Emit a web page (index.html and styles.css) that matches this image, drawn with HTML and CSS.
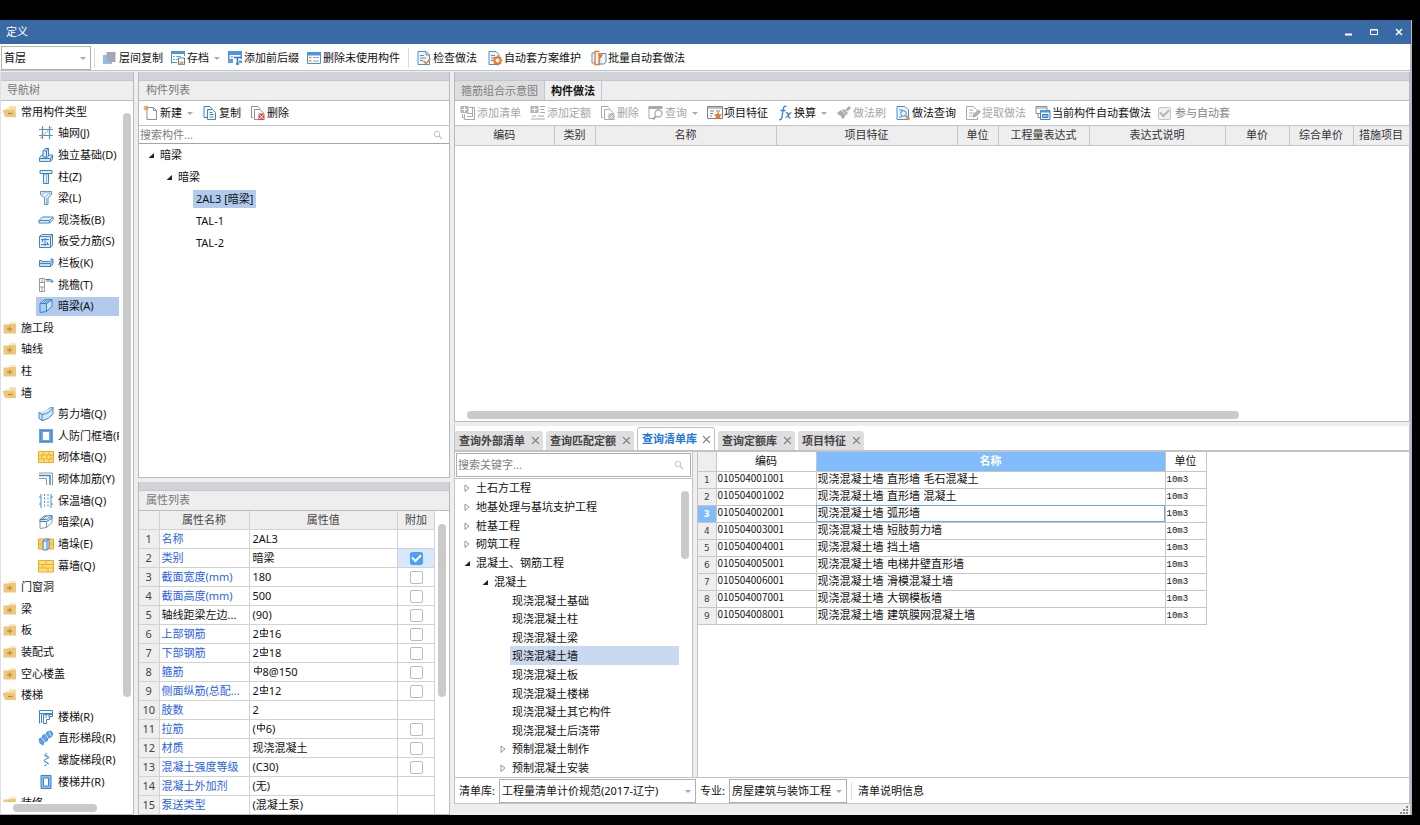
FILE: index.html
```html
<!DOCTYPE html>
<html lang="zh-CN">
<head>
<meta charset="utf-8">
<title>定义</title>
<link rel="stylesheet" href="styles.css">
</head>
<body>
<svg class="sprite" aria-hidden="true">
  <symbol id="folder" viewBox="0 0 16 16"><path d="M8 2.500h5q1 0 1 1H7z" fill="#f3cf8c"/><path d="M1.500 4.500h4.500l1-.5h7v9.500h-12.500z" fill="#eec67c"/><path d="M7.700 6.500v5M5.200 9h5" stroke="#c28f3a" stroke-width="1.300"/></symbol>
  <symbol id="folder-open" viewBox="0 0 16 16"><path d="M3 4.500h4l1-1h6v9h-10z" fill="#f6dba6"/><path d="M7 2.500h7v1H7z" fill="#f3cf8c"/><path d="M.5 6h12l1.500 7H3z" fill="#eec67c"/><path d="M6 9.500h4.500" stroke="#b9842c" stroke-width="1.200"/></symbol>
  <symbol id="axis" viewBox="0 0 16 16"><path d="M4.500 1v13M11.500 1v13M1 4.500h14M1 10.500h14" stroke="#4f93d8" stroke-width="1.200" fill="none"/><path d="M2 13.500 13.500 2" stroke="#e08a4a"/></symbol>
  <symbol id="base" viewBox="0 0 16 16" fill="#d9e9fa" stroke="#3f83cf"><path d="M1.500 10.500 4 8h10.500v4l-2 2.500h-11z"/><path d="M1.500 11.500h11v3M12.500 11.500l2-3"/><path d="M5 10V4l2-2.500h3.500V9L9 10.500z"/><path d="M5 4h3.500v6M8.500 4l2-2.500"/></symbol>
  <symbol id="column" viewBox="0 0 16 16" fill="#e3effb" stroke="#3f83cf"><path d="M5.500 5h5v9.500h-5z"/><path d="M2 1.500h12v3H2z"/><path d="M8.500 5v9" stroke="#8fb9e6"/></symbol>
  <symbol id="beam" viewBox="0 0 16 16" fill="#e3effb" stroke="#5b97d6"><path d="M2.500 1.500h11v3L10 8v6.500H6.500V8l-4-3.500z"/><path d="M3 4.500 8 2l5 2.500M6.500 8 12 2M8.500 8v6" stroke="#8fb9e6"/></symbol>
  <symbol id="slab" viewBox="0 0 16 16" fill="#e3effb" stroke="#3f83cf"><path d="M1 8.500 4.500 5h10.500v2.500L11.500 11H1z"/><path d="M1 8.500h10.500L15 5M11.500 8.500V11"/></symbol>
  <symbol id="slabbar" viewBox="0 0 16 16" fill="none" stroke="#3f83cf"><path d="M1.500 3.500 3.500 1.500h11v10.500l-2 2.500h-11z" fill="#e3effb"/><path d="M1.500 3.500h11v11M12.500 3.500l2-2M3 6.500h8M3 11.500h8M7 5v8M4.500 6v3M9.500 9v3"/></symbol>
  <symbol id="rail" viewBox="0 0 16 16" fill="#c7defa" stroke="#3f83cf"><path d="M1.500 5.500v6h11l2.500-2.500V4h-2v2.500H3.500v-1z"/><path d="M1.500 8.500h11L15 6M12.500 8.500v3"/></symbol>
  <symbol id="eaves" viewBox="0 0 16 16" fill="none" stroke="#9a9a9a"><path d="M1.500 1.500h5v13h-5zM1.500 5.500h5M1.500 10h5M4 1.500v4M4 10v4"/><path d="M7.500 2.500h5l2.500 1.500v1h-2v-1H8" stroke="#3f83cf"/></symbol>
  <symbol id="hbeam" viewBox="0 0 16 16" fill="#a9cdf5" stroke="#3f83cf"><path d="M2 5.500h6.500v8L2 14.500z"/><path d="M8.500 5.500 14 2v6.500l-5.500 5z" fill="#cfe3f9"/><path d="M2 5.500 6 2l8-.5-5.500 4z" fill="#dbeafa"/><path d="M4.500 5.500l4-3.500M6.500 5.500l5-4"/></symbol>
  <symbol id="hbeam-plain" viewBox="0 0 16 16" fill="#fff" stroke="#8a98a8"><path d="M2 5.500h6.500v8L2 14.500z"/><path d="M8.500 5.500 14 2v6.500l-5.500 5z"/><path d="M2 7.500v-2L6 2l8-.5v3l-5.500 3z" fill="#dbeafa" stroke="#3f83cf"/><path d="M2 5.500h6.500L14 2M4.500 5.500l4-3.500" stroke="#3f83cf"/></symbol>
  <symbol id="curve" viewBox="0 0 16 16" fill="#d4e6fa" stroke="#3f83cf"><path d="M1 6.500q8 0 10.500-4.500l3.500-.5v6Q11 13.500 4 14.500L1 12.500z"/><path d="M1 6.500l3 2q8-1 11-7M4 8.500v6"/></symbol>
  <symbol id="frame" viewBox="0 0 16 16"><path d="M1 1h14v14H1z" fill="#6aa5ea"/><path d="M2.500 2.500h11v11h-11z" fill="none" stroke="#4a8bd8"/><path d="M5 4h6v8H5z" fill="#fff"/></symbol>
  <symbol id="brick" viewBox="0 0 16 16"><path d="M.5 2.500h15v11H.5z" fill="#ffdf88" stroke="#f5ac1c"/><path d="M.5 6h15M.5 10h15M5.500 2.500V6M11 2.500V6M3.500 6v4M9 6v4M13 6v4M6 10v3.500M11 10v3.500" stroke="#f5ac1c"/></symbol>
  <symbol id="brickbar" viewBox="0 0 16 16" fill="none" stroke="#8f979f"><path d="M1 2h13.500v12.500M1 7.500h7.500V14"/><path d="M1 4.500h11V14" stroke="#3f83cf" stroke-width="1.500"/></symbol>
  <symbol id="insul" viewBox="0 0 16 16" fill="none" stroke="#4a8fdd"><path d="M3 1v14M13 1v14"/><path d="M6.500 1v14M10 1v14M1 4h2M1 11h2M13 4h2M13 11h2" stroke-dasharray="2 1.500"/></symbol>
  <symbol id="pier" viewBox="0 0 16 16"><path d="M.5 3h15v10H.5z" fill="#ffd061" stroke="#f0aa20"/><path d="M.5 8h15" stroke="#f0aa20"/><path d="M5 5l2-2h4v9l-2 2H5z" fill="#e3effb" stroke="#3f83cf"/><path d="M5 5h4v9M9 5l2-2" fill="none" stroke="#3f83cf"/></symbol>
  <symbol id="curtain" viewBox="0 0 16 16"><path d="M.5 2.500h15v11.500H.5z" fill="#ffdf88" stroke="#f5ac1c"/><path d="M.5 6.500h15M.5 10h15M8 2.500V6.500M5 6.500V10M10 10v4" stroke="#f5ac1c"/></symbol>
  <symbol id="stair" viewBox="0 0 16 16" fill="none" stroke="#3f83cf"><path d="M1.500 14.500v-13h13v6h-3v3h-3v4h-3v-9h9M1.500 4.500h13M3.500 5v9M8 5v4M11 5v3"/></symbol>
  <symbol id="flight" viewBox="0 0 16 16"><path d="M1 9l3-1 1-3 3 0 1-3 4-1 2 3-2 3-3 1-1 3-3 1-1 3-3-2z" fill="#5fa2ea" stroke="#4a8fdd"/><path d="M4 8l3 4M8 5l2 3M11 2l2 4" stroke="#cfe3f9"/></symbol>
  <symbol id="spiral" viewBox="0 0 16 16" fill="none" stroke="#4a8fdd"><path d="M9 1q-4 2 0 3 4 1.500-1 3-4 1.500 0 3 4 1.500-2 4M6 3l5 3M6 9l5 3"/></symbol>
  <symbol id="well" viewBox="0 0 16 16"><path d="M3 1.500h10v13H3z" fill="#8dbcf0" stroke="#3f83cf"/><path d="M5.500 4h5v8h-5z" fill="#fff" stroke="#3f83cf"/></symbol>
  <symbol id="open" viewBox="0 0 8 8"><path d="M7 2v5H1.500z" fill="#222"/></symbol>
  <symbol id="closed" viewBox="0 0 8 8"><path d="M2 1l4 3-4 3.500z" fill="#fff" stroke="#888" stroke-width=".9"/></symbol>
  <symbol id="search" viewBox="0 0 10 10"><circle cx="4" cy="4" r="2.800" fill="none" stroke="#c4c4c4"/><path d="M6 6l3 3" stroke="#c4c4c4" stroke-width="1.300"/></symbol>
  <symbol id="layers" viewBox="0 0 16 16"><path d="M1 5h9v9H1z" fill="#8fbdf0"/><path d="M4.500 2h9v10h-9z" fill="#a4a8b2"/></symbol>
  <symbol id="archive" viewBox="0 0 16 16" fill="none" stroke="#4a8fdd"><path d="M1.500 13.500v-12h13V6M1.500 12.500H7"/><path d="M1 1h14v3H1z" fill="#4a94e6" stroke="none"/><path d="M3 6.500h2M6 6.500h5M3 9.500h2M6 9.500h2" stroke="#8fa2b8"/><path d="M8.500 8h6v6.500h-6z" fill="#fff" stroke="#3f83cf"/><path d="M9.500 11.500h4v3h-4z" fill="#f0a050" stroke="none"/></symbol>
  <symbol id="affix" viewBox="0 0 16 16"><path d="M1 1h14v4H1zM1 5h1.500v6H1zM13.500 5H15v4h-1.500z" fill="#4a94e6"/><path d="M1 9h5v4H1z" fill="#5d9de4"/><path d="M3.500 6.500h3M3.500 8h2" stroke="#9fb4cc"/><path d="M7 7.500h7M10.500 7v7M9 14h3" stroke="#2f74c2" stroke-width="1.500"/><path d="M12 10.500h3V13h-3z" fill="#5d9de4"/></symbol>
  <symbol id="listx" viewBox="0 0 16 16"><path d="M1.500 2.500h13v11h-13z" fill="#fff" stroke="#4a8fdd"/><path d="M1 2h14v3.500H1z" fill="#4a94e6"/><path d="M3 7.500h2.500M3 11h2.500" stroke="#f0923c" stroke-width="1.500"/><path d="M7 7.500h6M7 11h6" stroke="#98a4b2"/></symbol>
  <symbol id="check" viewBox="0 0 16 16"><path d="M2 1.500h8l3.500 3.500v9.500H2z" fill="#edf5fd" stroke="#4a8fdd"/><path d="M10 1.500V5h3.500M4 5.500h4M4 8h6M4 10.500h3" stroke="#5f8fbf" fill="none"/><path d="M7.500 11l2.500 2.500 4.500-5" stroke="#f07a2a" stroke-width="1.500" fill="none"/></symbol>
  <symbol id="gear" viewBox="0 0 16 16"><path d="M2 1.500h7l3 3v10H2z" fill="#edf5fd" stroke="#4a8fdd"/><path d="M4 5.500h4M4 8h3M4 10.500h2" stroke="#5f8fbf"/><circle cx="10.500" cy="10.500" r="3" fill="#fff" stroke="#f07a2a" stroke-width="2"/><path d="M10.500 5.500v2M10.500 13.500v2M5.500 10.500h2M13.500 10.500h2M7 7l1.500 1.500M12.500 12.500L14 14M14 7l-1.500 1.500M8.500 12.500L7 14" stroke="#f07a2a" stroke-width="1.500"/></symbol>
  <symbol id="batch" viewBox="0 0 16 16" fill="none"><path d="M3.500 3H1v10h2.500M8 3.500h7v8.500l-2 2H8z" stroke="#4a8fdd" fill="#f2f8fe"/><path d="M8.500 1.500H4v13h4.500V7" stroke="#f07a2a" stroke-width="1.500"/><path d="M6.500 3.500q3-1.500 4 1h2l-3 4-3-4h2" fill="#f07a2a"/></symbol>
  <symbol id="new" viewBox="0 0 16 16"><path d="M4 2.500h6.500l3 3v9H4z" fill="#fff" stroke="#8b9097"/><path d="M10.500 2.500v3h3" fill="none" stroke="#8b9097"/><path d="M3 .5v5M.5 3h5M1 1l4 4M5 1L1 5" stroke="#f0923c"/></symbol>
  <symbol id="copy" viewBox="0 0 16 16" fill="#fff" stroke="#3f83cf"><path d="M2 1.500h6l2 2v9H2z"/><path d="M5.500 4.500h5l3 3v7h-8z"/><path d="M7.500 7.500h3M7.500 9.500h4M7.500 12h4"/></symbol>
  <symbol id="delete" viewBox="0 0 16 16" fill="#fff" stroke="#8b9097"><path d="M3 12.500H1.500v-11H8l2 2"/><path d="M4.500 4.500H10l3 3v7H4.500z"/><path d="M8.500 8.500h6v6.500h-6z" fill="#d84848" stroke="none"/><path d="M9.500 9.500l4 4.500M13.500 9.500l-4 4.500" stroke="#fff"/></symbol>
  <symbol id="addlist" viewBox="0 0 16 16" fill="none" stroke="#a9a9a9"><path d="M.5 1h8v7h-8z" fill="#b5b5b5" stroke="none"/><path d="M4.500 2v5M2 4.500h5" stroke="#fff"/><path d="M9 2.500h5.500v12h-10V9M2.500 9v3.500h2M7 8.500h5M7 11.500h5M12.500 3v9"/></symbol>
  <symbol id="addquota" viewBox="0 0 16 16" fill="none" stroke="#a9a9a9"><path d="M.5 1h8v7h-8z" fill="#b5b5b5" stroke="none"/><path d="M4.500 2v5M2 4.500h5" stroke="#fff"/><path d="M10 1.500h5M10 4.500h4M10 7.500h5M2 11h4M8 11h6M1 14h14"/></symbol>
  <symbol id="delgray" viewBox="0 0 16 16" fill="#fff" stroke="#a9a9a9"><path d="M3 12.500H1.500v-11H8l2 2"/><path d="M4.500 4.500H10l3 3v7H4.500z"/><path d="M8.500 8.500h6v6.500h-6z" fill="#aaa" stroke="none"/><path d="M9.500 9.500l4 4.500M13.500 9.500l-4 4.500" stroke="#fff"/></symbol>
  <symbol id="query" viewBox="0 0 16 16" fill="none" stroke="#a9a9a9"><path d="M.5 1h14v3H.5z" fill="#a9a9a9" stroke="none"/><path d="M1 2v11.500h4"/><circle cx="10.500" cy="8.500" r="3.500" stroke-width="1.300"/><path d="M8 11l-3 3.500" stroke-width="2"/></symbol>
  <symbol id="feature" viewBox="0 0 16 16"><path d="M.5 1.500h15v12H.5z" fill="#fff" stroke="#78828c"/><path d="M1 3h14" stroke="#78828c"/><path d="M3 6h4M3 8.500h3M3 11h2M9 6h4" stroke="#78828c"/><path d="M11 6.500l1.300 2.700 3 .3-2.200 2 .7 3-2.800-1.500L8.200 14.500l.7-3-2.200-2 3-.3z" fill="#f07a2a"/></symbol>
  <symbol id="fx" viewBox="0 0 16 16" fill="none" stroke="#3a7fd6" stroke-width="1.300"><path d="M9.500 1.500Q7 0 6.300 4L5 12Q4.300 15.500 2 14.500M3.500 5.500h5M9 8q1.500-1 2 1.500l.7 2.500q.6 1.500 1.800.5M14.500 8q-1.500-.5-3 2t-3 2.500"/></symbol>
  <symbol id="brush" viewBox="0 0 16 16" fill="#ababab"><path d="M1 8l4-3 5 5-3 4q-2-1-2-3-2 0-4-3z"/><path d="M6 5l2-1 4 4-1.500 2z"/><path d="M9.500 4.500L13 1l2 2-3.500 3.500z"/></symbol>
  <symbol id="find" viewBox="0 0 16 16" fill="none"><path d="M2 1.500h8l3.500 3.500v9.500H2z" fill="#edf5fd" stroke="#4a8fdd"/><path d="M4 5h4M4 12h3" stroke="#5f8fbf"/><circle cx="8.500" cy="8.500" r="2.800" stroke="#3a7fd6"/><path d="M11 11l3.500 3.500" stroke="#f0923c" stroke-width="2.500"/></symbol>
  <symbol id="extract" viewBox="0 0 16 16" fill="none" stroke="#a9a9a9"><path d="M12.500 12v2.500H1.500v-13h7l4 4M4 5h4M4 8h5M4 11h3"/><path d="M8 12l.5-2.500 5-4.500 2 2-5 4.500z" fill="#b2b2b2"/></symbol>
  <symbol id="current" viewBox="0 0 16 16" fill="#fff" stroke="#8b9097"><path d="M1 1.500h11v7H1zM1 3h11M3 9v3.500h2"/><path d="M5.500 5.500h9.500v9H5.500z" stroke="#3a7fd6"/><path d="M5 5h10v2.500H5z" fill="#4a94e6" stroke="none"/><path d="M7.500 9.500h5.500v3H7.500z" fill="#8fbdf0" stroke="#3a7fd6"/></symbol>
  <symbol id="rebar3" viewBox="0 0 10 10"><path d="M1.500 2.500h7v3.500h-7zM5 0v8.500M1 8.500h8" fill="none" stroke="#222" stroke-width=".9"/></symbol>
  <symbol id="rebar1" viewBox="0 0 10 10"><path d="M1.500 2.500h7v3.500h-7zM5 0v9" fill="none" stroke="#222" stroke-width=".9"/></symbol>
  <symbol id="close" viewBox="0 0 8 8"><path d="M1 1l6 6M7 1L1 7" stroke="currentColor" fill="none"/></symbol>
</svg>

<main class="window">
  <header class="titlebar">
    <h1>定义</h1>
    <div class="win-buttons">
      <button aria-label="最小化"><svg viewBox="0 0 8 8"><path d="M0 6.500h7" stroke="#fff" stroke-width="2"/></svg></button>
      <button aria-label="最大化"><svg viewBox="0 0 8 8"><path d="M.5 1.500h7v5h-7zM.5 2h7" fill="none" stroke="#fff"/></svg></button>
      <button aria-label="关闭"><svg viewBox="0 0 8 8"><path d="M1 1l6 6M7 1L1 7" stroke="#fff" stroke-width="1.500"/></svg></button>
    </div>
  </header>

  <div class="toolbar main-toolbar">
    <span class="select floor"><select aria-label="楼层"><option>首层</option></select></span>
    <div class="group">
      <button><svg><use href="#layers"/></svg>层间复制</button>
      <button><svg><use href="#archive"/></svg>存档<i class="drop"></i></button>
      <button><svg><use href="#affix"/></svg>添加前后缀</button>
      <button><svg><use href="#listx"/></svg>删除未使用构件</button>
    </div>
    <div class="group wide">
      <button><svg><use href="#check"/></svg>检查做法</button>
      <button><svg><use href="#gear"/></svg>自动套方案维护</button>
      <button><svg><use href="#batch"/></svg>批量自动套做法</button>
    </div>
  </div>

  <div class="columns">
    <section class="panel nav">
      <h2 class="panel-title">导航树</h2>
      <div class="nav-body">
        <ul class="nav-tree">
          <li><button><svg><use href="#folder-open"/></svg>常用构件类型</button></li>
          <li class="leaf"><button><svg><use href="#axis"/></svg>轴网(J)</button></li>
          <li class="leaf"><button><svg><use href="#base"/></svg>独立基础(D)</button></li>
          <li class="leaf"><button><svg><use href="#column"/></svg>柱(Z)</button></li>
          <li class="leaf"><button><svg><use href="#beam"/></svg>梁(L)</button></li>
          <li class="leaf"><button><svg><use href="#slab"/></svg>现浇板(B)</button></li>
          <li class="leaf"><button><svg><use href="#slabbar"/></svg>板受力筋(S)</button></li>
          <li class="leaf"><button><svg><use href="#rail"/></svg>栏板(K)</button></li>
          <li class="leaf"><button><svg><use href="#eaves"/></svg>挑檐(T)</button></li>
          <li class="leaf selected"><button><svg><use href="#hbeam"/></svg>暗梁(A)</button></li>
          <li><button><svg><use href="#folder"/></svg>施工段</button></li>
          <li><button><svg><use href="#folder"/></svg>轴线</button></li>
          <li><button><svg><use href="#folder"/></svg>柱</button></li>
          <li><button><svg><use href="#folder-open"/></svg>墙</button></li>
          <li class="leaf"><button><svg><use href="#curve"/></svg>剪力墙(Q)</button></li>
          <li class="leaf"><button><svg><use href="#frame"/></svg>人防门框墙(R)</button></li>
          <li class="leaf"><button><svg><use href="#brick"/></svg>砌体墙(Q)</button></li>
          <li class="leaf"><button><svg><use href="#brickbar"/></svg>砌体加筋(Y)</button></li>
          <li class="leaf"><button><svg><use href="#insul"/></svg>保温墙(Q)</button></li>
          <li class="leaf"><button><svg><use href="#hbeam-plain"/></svg>暗梁(A)</button></li>
          <li class="leaf"><button><svg><use href="#pier"/></svg>墙垛(E)</button></li>
          <li class="leaf"><button><svg><use href="#curtain"/></svg>幕墙(Q)</button></li>
          <li><button><svg><use href="#folder"/></svg>门窗洞</button></li>
          <li><button><svg><use href="#folder"/></svg>梁</button></li>
          <li><button><svg><use href="#folder"/></svg>板</button></li>
          <li><button><svg><use href="#folder"/></svg>装配式</button></li>
          <li><button><svg><use href="#folder"/></svg>空心楼盖</button></li>
          <li><button><svg><use href="#folder-open"/></svg>楼梯</button></li>
          <li class="leaf"><button><svg><use href="#stair"/></svg>楼梯(R)</button></li>
          <li class="leaf"><button><svg><use href="#flight"/></svg>直形梯段(R)</button></li>
          <li class="leaf"><button><svg><use href="#spiral"/></svg>螺旋梯段(R)</button></li>
          <li class="leaf"><button><svg><use href="#well"/></svg>楼梯井(R)</button></li>
          <li><button><svg><use href="#folder"/></svg>装修</button></li>
        </ul>
        <div class="vscroll nav-vscroll"><i></i></div>
        <div class="hscroll nav-hscroll"><i></i></div>
      </div>
    </section>

    <div class="middle">
      <section class="panel components">
        <h2 class="panel-title">构件列表</h2>
        <div class="toolbar comp-toolbar">
          <button><svg><use href="#new"/></svg>新建<i class="drop"></i></button>
          <button><svg><use href="#copy"/></svg>复制</button>
          <button><svg><use href="#delete"/></svg>删除</button>
        </div>
        <label class="search"><input type="text" placeholder="搜索构件..." aria-label="搜索构件"><svg><use href="#search"/></svg></label>
        <ul class="tree comp-tree">
          <li class="l1"><svg><use href="#open"/></svg><span>暗梁</span></li>
          <li class="l2"><svg><use href="#open"/></svg><span>暗梁</span></li>
          <li class="l3 selected"><span>2AL3 [暗梁]</span></li>
          <li class="l3"><span>TAL-1</span></li>
          <li class="l3"><span>TAL-2</span></li>
        </ul>
      </section>
      <section class="panel props">
        <h2 class="panel-title">属性列表</h2>
        <div class="props-body">
          <table class="prop-table">
            <colgroup><col class="w-num"><col class="w-name"><col><col class="w-add"></colgroup>
            <thead><tr><th></th><th>属性名称</th><th>属性值</th><th>附加</th></tr></thead>
            <tbody>
              <tr><th>1</th><td>名称</td><td>2AL3</td><td></td></tr>
              <tr><th>2</th><td>类别</td><td>暗梁</td><td class="on"><input type="checkbox" aria-label="附加 类别" checked></td></tr>
              <tr><th>3</th><td>截面宽度(mm)</td><td>180</td><td><input type="checkbox" aria-label="附加 截面宽度"></td></tr>
              <tr><th>4</th><td>截面高度(mm)</td><td>500</td><td><input type="checkbox" aria-label="附加 截面高度"></td></tr>
              <tr class="plain"><th>5</th><td>轴线距梁左边...</td><td>(90)</td><td><input type="checkbox" aria-label="附加 轴线距梁左边"></td></tr>
              <tr><th>6</th><td>上部钢筋</td><td>2<svg><use href="#rebar3"/></svg>16</td><td><input type="checkbox" aria-label="附加 上部钢筋"></td></tr>
              <tr><th>7</th><td>下部钢筋</td><td>2<svg><use href="#rebar3"/></svg>18</td><td><input type="checkbox" aria-label="附加 下部钢筋"></td></tr>
              <tr><th>8</th><td>箍筋</td><td><svg><use href="#rebar1"/></svg>8@150</td><td><input type="checkbox" aria-label="附加 箍筋"></td></tr>
              <tr><th>9</th><td>侧面纵筋(总配...</td><td>2<svg><use href="#rebar3"/></svg>12</td><td><input type="checkbox" aria-label="附加 侧面纵筋"></td></tr>
              <tr><th>10</th><td>肢数</td><td>2</td><td></td></tr>
              <tr><th>11</th><td>拉筋</td><td>(<svg><use href="#rebar1"/></svg>6)</td><td><input type="checkbox" aria-label="附加 拉筋"></td></tr>
              <tr><th>12</th><td>材质</td><td>现浇混凝土</td><td><input type="checkbox" aria-label="附加 材质"></td></tr>
              <tr><th>13</th><td>混凝土强度等级</td><td>(C30)</td><td><input type="checkbox" aria-label="附加 混凝土强度等级"></td></tr>
              <tr><th>14</th><td>混凝土外加剂</td><td>(无)</td><td></td></tr>
              <tr><th>15</th><td>泵送类型</td><td>(混凝土泵)</td><td></td></tr>
            </tbody>
          </table>
          <div class="vscroll props-vscroll"><i></i></div>
        </div>
      </section>
    </div>

    <div class="right">
      <section class="panel methods">
        <div class="top-tabs"><button>箍筋组合示意图</button><button class="active">构件做法</button></div>
        <div class="toolbar method-toolbar">
          <button disabled><svg><use href="#addlist"/></svg>添加清单</button>
          <button disabled><svg><use href="#addquota"/></svg>添加定额</button>
          <button disabled><svg><use href="#delgray"/></svg>删除</button>
          <button disabled><svg><use href="#query"/></svg>查询<i class="drop"></i></button>
          <button><svg><use href="#feature"/></svg>项目特征</button>
          <button><svg><use href="#fx"/></svg>换算<i class="drop"></i></button>
          <button disabled><svg><use href="#brush"/></svg>做法刷</button>
          <button><svg><use href="#find"/></svg>做法查询</button>
          <button disabled><svg><use href="#extract"/></svg>提取做法</button>
          <button><svg><use href="#current"/></svg>当前构件自动套做法</button>
          <label class="auto"><input type="checkbox" checked disabled>参与自动套</label>
        </div>
        <table class="method-table">
          <colgroup><col class="c1"><col class="c2"><col class="c3"><col class="c3"><col class="c2"><col class="c4"><col class="c5"><col class="c6"><col class="c6"><col class="c7"></colgroup>
          <thead><tr><th>编码</th><th>类别</th><th>名称</th><th>项目特征</th><th>单位</th><th>工程量表达式</th><th>表达式说明</th><th>单价</th><th>综合单价</th><th>措施项目</th></tr></thead>
        </table>
        <div class="hscroll method-hscroll"><i></i></div>
      </section>

      <section class="queries">
        <div class="tabs">
          <div class="tab"><button>查询外部清单</button><button aria-label="关闭"><svg><use href="#close"/></svg></button></div>
          <div class="tab"><button>查询匹配定额</button><button aria-label="关闭"><svg><use href="#close"/></svg></button></div>
          <div class="tab active"><button>查询清单库</button><button aria-label="关闭"><svg><use href="#close"/></svg></button></div>
          <div class="tab"><button>查询定额库</button><button aria-label="关闭"><svg><use href="#close"/></svg></button></div>
          <div class="tab"><button>项目特征</button><button aria-label="关闭"><svg><use href="#close"/></svg></button></div>
        </div>
        <div class="query-body">
          <div class="library">
            <label class="search boxed"><input type="text" placeholder="搜索关键字..." aria-label="搜索关键字"><svg><use href="#search"/></svg></label>
            <div class="library-list">
              <ul class="tree lib-tree">
                <li class="l1"><svg><use href="#closed"/></svg><span>土石方工程</span></li>
                <li class="l1"><svg><use href="#closed"/></svg><span>地基处理与基坑支护工程</span></li>
                <li class="l1"><svg><use href="#closed"/></svg><span>桩基工程</span></li>
                <li class="l1"><svg><use href="#closed"/></svg><span>砌筑工程</span></li>
                <li class="l1"><svg><use href="#open"/></svg><span>混凝土、钢筋工程</span></li>
                <li class="l2"><svg><use href="#open"/></svg><span>混凝土</span></li>
                <li class="l3"><span>现浇混凝土基础</span></li>
                <li class="l3"><span>现浇混凝土柱</span></li>
                <li class="l3"><span>现浇混凝土梁</span></li>
                <li class="l3 selected"><span>现浇混凝土墙</span></li>
                <li class="l3"><span>现浇混凝土板</span></li>
                <li class="l3"><span>现浇混凝土楼梯</span></li>
                <li class="l3"><span>现浇混凝土其它构件</span></li>
                <li class="l3"><span>现浇混凝土后浇带</span></li>
                <li class="l3b"><svg><use href="#closed"/></svg><span>预制混凝土制作</span></li>
                <li class="l3b"><svg><use href="#closed"/></svg><span>预制混凝土安装</span></li>
              </ul>
              <div class="vscroll lib-vscroll"><i></i></div>
            </div>
          </div>
          <div class="results">
            <table class="result-table">
              <colgroup><col class="r1"><col class="r2"><col class="r3"><col class="r4"></colgroup>
              <thead><tr><th></th><th>编码</th><th class="hot">名称</th><th>单位</th></tr></thead>
              <tbody>
                <tr><th>1</th><td>010504001001</td><td>现浇混凝土墙 直形墙 毛石混凝土</td><td>10m3</td></tr>
                <tr><th>2</th><td>010504001002</td><td>现浇混凝土墙 直形墙 混凝土</td><td>10m3</td></tr>
                <tr class="current"><th>3</th><td>010504002001</td><td>现浇混凝土墙 弧形墙</td><td>10m3</td></tr>
                <tr><th>4</th><td>010504003001</td><td>现浇混凝土墙 短肢剪力墙</td><td>10m3</td></tr>
                <tr><th>5</th><td>010504004001</td><td>现浇混凝土墙 挡土墙</td><td>10m3</td></tr>
                <tr><th>6</th><td>010504005001</td><td>现浇混凝土墙 电梯井壁直形墙</td><td>10m3</td></tr>
                <tr><th>7</th><td>010504006001</td><td>现浇混凝土墙 滑模混凝土墙</td><td>10m3</td></tr>
                <tr><th>8</th><td>010504007001</td><td>现浇混凝土墙 大钢模板墙</td><td>10m3</td></tr>
                <tr><th>9</th><td>010504008001</td><td>现浇混凝土墙 建筑膜网混凝土墙</td><td>10m3</td></tr>
              </tbody>
            </table>
          </div>
        </div>
        <div class="query-footer">
          <label for="lib">清单库:</label>
          <span class="select lib"><select id="lib"><option>工程量清单计价规范(2017-辽宁)</option></select></span>
          <label for="major">专业:</label>
          <span class="select major"><select id="major"><option>房屋建筑与装饰工程</option></select></span>
          <i class="sep"></i>
          <button>清单说明信息</button>
        </div>
      </section>
      <footer class="status"><svg viewBox="0 0 8 8"><path d="M6 0h2v2H6zM3 3h2v2H3zM6 3h2v2H6zM0 6h2v2H0zM3 6h2v2H3zM6 6h2v2H6z" fill="#8a8a8a"/></svg></footer>
    </div>
  </div>
</main>
</body>
</html>
```
FILE: styles.css
```css
* { box-sizing: border-box; }
html, body { height: 100%; }
body {
  margin: 0;
  padding: 20px 8px 10px 0;
  background: #000;
  color: #111;
  font: 11px/16px "Noto Sans", "Noto Sans CJK SC", sans-serif;
  overflow: hidden;
}
button, input, select { font: inherit; color: inherit; margin: 0; }
button { border: 0; background: none; padding: 0; white-space: nowrap; }
ul { list-style: none; margin: 0; padding: 0; }
h1, h2 { margin: 0; font: inherit; }
table { border-collapse: collapse; table-layout: fixed; }
th { font-weight: 400; }
svg { flex: none; }
.sprite { display: none; }

.window {
  height: 100%;
  display: flex;
  flex-direction: column;
  background: #eee;
  border-right: 2px solid #b4bac6;
}
.titlebar {
  flex: 0 0 24px;
  display: flex;
  align-items: center;
  justify-content: space-between;
  margin-right: -1px;
  padding: 0 6px;
  background: #396aa6;
  color: #fff;
}
.win-buttons { display: flex; gap: 17px; padding-right: 2px; }
.win-buttons button { display: flex; }
.win-buttons svg { width: 8px; height: 8px; }

/* toolbars */
.toolbar { display: flex; align-items: center; background: #fff; white-space: nowrap; overflow: hidden; }
.toolbar button, .auto { display: flex; align-items: center; gap: 1px; }
.toolbar button svg { width: 16px; height: 16px; }
.toolbar button:disabled { color: #a6a6a6; }
.drop {
  border: 3px solid transparent;
  border-top-color: #aaa;
  border-bottom: 0;
  margin-left: 4px;
}
.sep { width: 1px; height: 18px; background: #ddd; }
.main-toolbar { flex: 0 0 27px; padding: 2px 1px 0; border-bottom: 1px solid #c2c3c8; }
.group { display: flex; align-items: center; gap: 7px; height: 20px; margin-left: 3px; padding-left: 7px; border-left: 1px solid #ddd; }
.group.wide { gap: 10px; margin-left: 8px; }
.comp-toolbar { flex: 0 0 25px; gap: 9px; padding: 0 4px; border-bottom: 1px solid #c2c3c8; }
.method-toolbar { flex: 0 0 25px; gap: 9px; padding: 0 5px; border-bottom: 1px solid #c2c3c8; }
.method-toolbar .auto { gap: 4px; color: #858585; margin-left: -2px; }

.select { position: relative; display: flex; }
.select select {
  width: 100%;
  height: 24px;
  padding: 0 2px;
  border: 1px solid #b0b0b0;
  border-radius: 0;
  background: #fff;
  appearance: none;
}
.select::after {
  content: "";
  position: absolute;
  right: 5px;
  top: 11px;
  border: 3px solid transparent;
  border-top-color: #aaa;
  border-bottom: 0;
}
.floor { width: 90px; }
.lib { width: 197px; }
.major { width: 118px; }

/* columns */
.columns {
  flex: 1;
  min-height: 0;
  display: grid;
  grid-template-columns: 134px 312px minmax(0, 1fr);
  column-gap: 4px;
  padding-top: 1px;
}
.panel { display: flex; flex-direction: column; min-height: 0; border: 1px solid #b9bac0; border-top: 0; background: #fff; }
.panel::before { content: ""; flex: 0 0 8px; background: #d2d3d9; border-bottom: 1px solid #c5c6cc; }
.panel-title { flex: 0 0 20px; padding: 1px 7px; background: #eee; color: #777; border-bottom: 1px solid #bbbcc2; }
.nav { border-left-color: #e0e0e0; }
.nav .panel-title { padding-left: 6px; }
.vscroll i, .hscroll i { display: block; border-radius: 4px; background: #cacaca; }
.vscroll i { width: 8px; }
.hscroll i { height: 8px; }

.nav-body { position: relative; flex: 1; min-height: 0; display: flex; overflow: hidden; }
.nav-tree { flex: 1; min-width: 0; display: grid; grid-auto-rows: minmax(0, 1fr); padding-right: 2px; }
.nav-tree li { display: flex; align-items: center; min-height: 0; min-width: 0; }
.nav-tree button { display: flex; align-items: center; gap: 3px; width: 100%; height: 19px; padding-left: 1px; overflow: hidden; }
.nav-tree svg { width: 16px; height: 16px; }
.nav-tree .leaf { padding-left: 35px; }
.nav-tree .leaf button { padding-left: 2px; gap: 4px; }
.nav-tree .selected button { background: #b0cbed; }
.nav-vscroll { flex: 0 0 12px; padding: 12px 2px 117px; }
.nav-vscroll i { height: 100%; }
.nav-hscroll { position: absolute; left: 0; right: 0; bottom: 0; padding: 2px 12px; background: #fff; }
.nav-hscroll i { width: 84px; }

.middle { display: flex; flex-direction: column; gap: 4px; min-height: 0; }
.components { flex: 406 1 0; }
.props { flex: 333 1 0; }
.search { flex: none; display: flex; align-items: center; height: 18px; padding-right: 6px; border-bottom: 1px solid #a5a5a5; background: #fff; }
.search input { flex: 1; min-width: 0; padding: 0 1px; border: 0; outline: 0; background: none; }
.search input::placeholder { color: #808080; }
.search svg { width: 10px; height: 10px; }
.search.boxed { height: 24px; margin: 1px; border: 1px solid #b0b0b0; }

.tree li { display: flex; align-items: center; gap: 5px; }
.tree svg { width: 8px; height: 8px; }
.comp-tree li { height: 22px; }
.comp-tree .l1 { padding-left: 8px; }
.comp-tree .l2 { padding-left: 26px; }
.comp-tree .l3 { padding-left: 54px; }
.comp-tree .l3 span { padding: 1px 3px; }
.comp-tree .selected span { background: #b0cbed; }

.props-body { flex: 1; min-height: 0; display: flex; overflow: hidden; }
.prop-table { flex: 1; align-self: flex-start; }
.w-num { width: 20px; }
.w-name { width: 90px; }
.w-add { width: 37px; }
.prop-table th, .prop-table td { height: 19px; padding: 0 3px; line-height: 16px; border: 1px solid #d2d2d2; border-top: 0; white-space: nowrap; overflow: hidden; }
.prop-table th { background: #eee; color: #444; padding: 0; }
.prop-table tr > :first-child { border-left: 0; }
.prop-table td:nth-child(2) { color: #2a62f0; padding: 0 2px; }
.prop-table .plain td:nth-child(2) { color: #111; }
.prop-table td:last-child { padding: 0; }
.prop-table td.on { background: #d5e8fd; }
.prop-table td svg { width: 10px; height: 10px; vertical-align: 0; }
input[type="checkbox"] {
  appearance: none;
  display: grid;
  place-items: center;
  width: 13px;
  height: 13px;
  border: 1px solid #bbb;
  border-radius: 2px;
  background: #fff;
}
.prop-table input[type="checkbox"] { margin: 0 auto; }
input[type="checkbox"]:checked { background: #4f9ff8; border-color: #4f9ff8; }
input[type="checkbox"]:checked::after { content: ""; width: 7px; height: 4px; border: solid #fff; border-width: 0 0 2px 2px; transform: rotate(-45deg); margin-bottom: 2px; }
.auto input[type="checkbox"]:checked { background: #f0f0f0; border-color: #c4c4c4; }
.auto input[type="checkbox"]:checked::after { border-color: #b5b5b5; }
.props-vscroll { flex: 0 0 13px; padding: 13px 3px 117px; }
.props-vscroll i { height: 100%; }

.right { display: flex; flex-direction: column; min-width: 0; min-height: 0; }
.methods { flex: 352 1 0; }
.top-tabs { flex: 0 0 20px; display: flex; background: #eee; border-bottom: 1px solid #bbbcc2; }
.top-tabs button { padding: 0 6px; background: #dedede; color: #808080; border-right: 1px solid #c6c6ca; }
.top-tabs .active { background: #eee; color: #111; font-weight: 600; }
.method-table { width: 100%; }
.method-table th { height: 19px; padding: 0; line-height: 16px; background: #eee; color: #333; border: 1px solid #c6c6ca; border-top: 0; white-space: nowrap; }
.method-table th:first-child { border-left: 0; }
.c1 { width: 99px; } .c2 { width: 41px; } .c3 { width: 181px; } .c4 { width: 91px; }
.c5 { width: 136px; } .c6 { width: 64px; } .c7 { width: 56px; }
.method-hscroll { margin-top: auto; padding: 2px 12px; }
.method-hscroll i { width: 83%; }

.queries { flex: 380 1 0; min-height: 0; display: flex; flex-direction: column; border: 1px solid #c2c3c8; border-top: 4px solid #eee; background: #fff; }
.tabs { flex: 0 0 26px; display: flex; align-items: flex-end; gap: 3px; border-bottom: 2px solid #c2c3c8; }
.tab { display: flex; align-items: center; height: 19px; padding: 0 3px 0 4px; gap: 6px; background: #dedede; color: #444; border-radius: 3px 3px 0 0; font-weight: 600; }
.tab svg { display: block; width: 9px; height: 9px; color: #777; }
.tab.active { height: 23px; background: #fff; border: 1px solid #c2c3c8; border-bottom: 0; color: #1e78e0; gap: 5px; }
.query-body { flex: 1; min-height: 0; display: flex; gap: 4px; background: #eee; }
.library { flex: 0 0 238px; display: flex; flex-direction: column; border-right: 1px solid #c2c3c8; background: #fff; }
.library-list { flex: 1; min-height: 0; display: flex; overflow: hidden; border-top: 1px solid #c2c3c8; }
.lib-tree { flex: 1; min-width: 0; display: grid; grid-auto-rows: minmax(0, 1fr); }
.lib-tree li { min-height: 0; }
.lib-tree .l1 { padding-left: 8px; }
.lib-tree .l2 { padding-left: 26px; }
.lib-tree .l3 { padding-left: 55px; }
.lib-tree .l3b { padding-left: 44px; }
.lib-tree .l3 span { flex: 1; padding: 1px 2px; line-height: 17px; }
.lib-tree .selected span { background: #c8d9f0; }
.lib-vscroll { flex: 0 0 13px; padding: 12px 2px; }
.lib-vscroll i { height: 68px; }
.results { flex: 1; min-width: 0; background: #fff; border-left: 1px solid #c2c3c8; overflow: hidden; }
.result-table { width: 508px; font-family: "DejaVu Sans", "Noto Sans CJK SC", sans-serif; }
.r1 { width: 18px; } .r2 { width: 100px; } .r3 { width: 349px; } .r4 { width: 41px; }
.result-table th, .result-table td { height: 17px; padding: 0 1px; line-height: 14px; border: 1px solid #c6c6c6; border-top: 0; white-space: nowrap; overflow: hidden; }
.result-table thead th { height: 19px; line-height: 17px; }
.result-table tr > :first-child { background: #eee; border-left: 0; font-size: 9px; color: #444; }
.result-table td:nth-child(2) { font-family: "Noto Sans CJK SC", sans-serif; font-size: 10px; line-height: 12px; vertical-align: top; }
.result-table td:last-child { font-family: "Liberation Mono", monospace; font-size: 9px; }
.result-table .hot { background: #80bbfb; color: #fff; font-weight: 700; }
.result-table .current th:first-child { background: #80bbfb; color: #fff; font-weight: 700; }
.result-table .current td:nth-child(3) { outline: 1px solid #6aabef; outline-offset: -1px; }
.query-footer { flex: 0 0 26px; display: flex; align-items: center; gap: 4px; padding: 0 4px; border-top: 1px solid #c2c3c8; }
.query-footer .sep { margin-right: 2px; }
.status { flex: 0 0 11px; display: flex; justify-content: flex-end; align-items: center; padding: 0 2px; background: #eee; }
.status svg { width: 8px; height: 8px; }
```
